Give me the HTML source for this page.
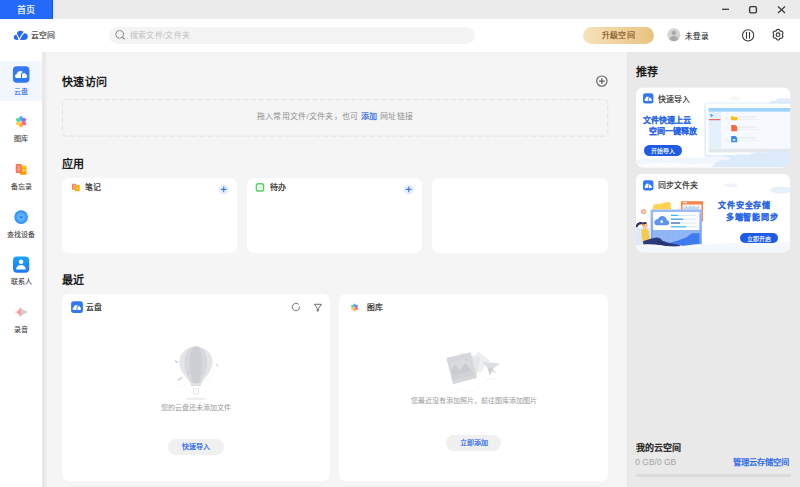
<!DOCTYPE html>
<html lang="zh-CN"><head><meta charset="utf-8">
<style>
*{box-sizing:border-box;margin:0;padding:0}
html,body{width:800px;height:487px;overflow:hidden;background:#f5f5f5;font-family:"Liberation Sans",sans-serif;color:#222}
.abs{position:absolute}
#titlebar{left:0;top:0;width:800px;height:19px;background:#ebebeb}
#tab{left:0;top:0;width:53px;height:19.5px;background:#2369fa;border-right:1px solid #0a55f5;border-bottom:1px solid #0a55f5;color:#fff;font-size:9px;-webkit-text-stroke:0.2px #fff;line-height:21px;text-align:center}
#header{left:0;top:19px;width:800px;height:33px;background:#fff}
#sidebar{left:0;top:52px;width:42px;height:435px;background:#fff}
#main{left:42px;top:52px;width:585px;height:435px;background:#f5f5f5;box-shadow:inset 0 1px 1px rgba(0,0,0,0.015)}
#right{left:627px;top:52px;width:173px;height:435px;background:#e9e9e9;box-shadow:inset 1px 1px 1.5px rgba(0,0,0,0.02)}
.sb-sel{left:0;top:61.3px;width:42px;height:39.4px;background:#f2f6fe}
.sb-icon{width:16.5px;height:16.5px;border-radius:4px}
.sb-txt{width:42px;text-align:center;font-size:7px;color:#444;line-height:8px;-webkit-text-stroke:0.1px #444}
.h2{font-size:11px;font-weight:bold;color:#191919;line-height:14px;letter-spacing:0.4px}
.card{background:#fff;border-radius:7px}
</style></head>
<body>
<div id="titlebar" class="abs"></div>
<div id="tab" class="abs">首页</div>
<!-- window controls -->
<svg class="abs" style="left:715px;top:0" width="85" height="19" viewBox="0 0 85 19">
 <line x1="7" y1="9.3" x2="14" y2="9.3" stroke="#333" stroke-width="1.25"/>
 <rect x="34.6" y="6.6" width="6.8" height="6.3" rx="1.3" fill="none" stroke="#333" stroke-width="1.35"/>
 <path d="M63 6.5 L70 13 M70 6.5 L63 13" stroke="#333" stroke-width="1.1"/>
</svg>
<div id="header" class="abs"></div>
<div id="sidebar" class="abs"></div>
<div id="main" class="abs"></div>
<div id="right" class="abs"></div>
<div class="abs" style="left:42px;top:52px;width:6px;height:435px;background:linear-gradient(90deg,#eeeeee 0,#e6e6e6 25%,#ebebeb 50%,#f1f1f1 75%,#f5f5f5 100%)"></div>
<div class="sb-sel abs"></div>


<!-- sidebar -->
<svg class="abs" style="left:0;top:52px" width="42" height="300" viewBox="0 52 42 300">
 <defs>
  <linearGradient id="gcont" x1="0" y1="0" x2="0" y2="1"><stop offset="0" stop-color="#19a3ff"/><stop offset="1" stop-color="#1f78fb"/></linearGradient>
  <radialGradient id="gfind" cx="0.5" cy="0.5" r="0.5"><stop offset="0" stop-color="#3b82f0"/><stop offset="0.18" stop-color="#3b86f2"/><stop offset="0.3" stop-color="#66bdfd"/><stop offset="0.6" stop-color="#4aa8fb"/><stop offset="1" stop-color="#2a8af5"/></radialGradient>
  <linearGradient id="gmemo2" x1="0" y1="0" x2="0" y2="1"><stop offset="0" stop-color="#ffc300"/><stop offset="1" stop-color="#ff9500"/></linearGradient>
  <filter id="tsh" x="-30%" y="-30%" width="160%" height="160%"><feDropShadow dx="0" dy="0" stdDeviation="0.6" flood-color="#000" flood-opacity="0.08"/></filter>
 </defs>
 <!-- cloud drive -->
 <rect x="12.9" y="66.2" width="16.5" height="16.5" rx="4" fill="#3177f6"/>
 <path d="M20.9 78 H16.8 C15.8 78 15 77.2 15 76.2 C15 75.2 15.7 74.4 16.6 74.3 C16.9 72.3 18.4 70.9 20.3 70.9 C21.3 70.9 22.2 71.3 22.9 71.9 C21.7 72.5 20.9 73.6 20.9 75 Z" fill="#fff"/>
 <path d="M22 78 V75.1 C22 73.9 22.9 72.9 24 72.9 C25 72.9 25.7 73.6 25.9 74.5 C26.6 74.7 27.1 75.4 27.1 76.2 C27.1 77.2 26.3 78 25.3 78 Z" fill="#fff"/>
 <!-- gallery -->
 <rect x="12.8" y="113.4" width="16.6" height="16.5" rx="4" fill="#fff" filter="url(#tsh)"/>
 <g transform="translate(21.07 121.7)"><path d="M0 -0.6 C1.4 -1.4 2.1 -2.4 2 -3.3 C1.9 -4.5 0.9 -5.8 0 -5.8 C-0.9 -5.8 -1.9 -4.5 -2 -3.3 C-2.1 -2.4 -1.4 -1.4 0 -0.6Z" fill="#34a3fa" opacity="0.88" transform="rotate(0)"/><path d="M0 -0.6 C1.4 -1.4 2.1 -2.4 2 -3.3 C1.9 -4.5 0.9 -5.8 0 -5.8 C-0.9 -5.8 -1.9 -4.5 -2 -3.3 C-2.1 -2.4 -1.4 -1.4 0 -0.6Z" fill="#8d5cf2" opacity="0.88" transform="rotate(60)"/><path d="M0 -0.6 C1.4 -1.4 2.1 -2.4 2 -3.3 C1.9 -4.5 0.9 -5.8 0 -5.8 C-0.9 -5.8 -1.9 -4.5 -2 -3.3 C-2.1 -2.4 -1.4 -1.4 0 -0.6Z" fill="#ff4f70" opacity="0.88" transform="rotate(120)"/><path d="M0 -0.6 C1.4 -1.4 2.1 -2.4 2 -3.3 C1.9 -4.5 0.9 -5.8 0 -5.8 C-0.9 -5.8 -1.9 -4.5 -2 -3.3 C-2.1 -2.4 -1.4 -1.4 0 -0.6Z" fill="#ff9c40" opacity="0.88" transform="rotate(180)"/><path d="M0 -0.6 C1.4 -1.4 2.1 -2.4 2 -3.3 C1.9 -4.5 0.9 -5.8 0 -5.8 C-0.9 -5.8 -1.9 -4.5 -2 -3.3 C-2.1 -2.4 -1.4 -1.4 0 -0.6Z" fill="#ffc73a" opacity="0.88" transform="rotate(240)"/><path d="M0 -0.6 C1.4 -1.4 2.1 -2.4 2 -3.3 C1.9 -4.5 0.9 -5.8 0 -5.8 C-0.9 -5.8 -1.9 -4.5 -2 -3.3 C-2.1 -2.4 -1.4 -1.4 0 -0.6Z" fill="#3fdb8c" opacity="0.88" transform="rotate(300)"/></g>
 <!-- memo -->
 <rect x="12.9" y="161" width="16.4" height="16.2" rx="4" fill="#fff" filter="url(#tsh)"/>
 <rect x="20" y="165.8" width="6.5" height="9" rx="0.8" fill="url(#gmemo2)"/>
 <rect x="15.7" y="164" width="6" height="9" rx="0.8" fill="#ff6d4a"/>
 <rect x="17" y="165.5" width="3.4" height="6" fill="#ffab95" opacity="0.7"/>
 <circle cx="23.6" cy="170.4" r="1.1" fill="#ffe38a"/>
 <!-- find device -->
 <rect x="12.9" y="209" width="16.4" height="16.2" rx="4" fill="#fff" filter="url(#tsh)"/>
 <circle cx="21.1" cy="217.1" r="6.8" fill="url(#gfind)"/>
 <!-- contacts -->
 <rect x="13" y="256.5" width="16.2" height="16.3" rx="4" fill="url(#gcont)"/>
 <circle cx="21.1" cy="261.7" r="2.3" fill="#fff"/>
 <path d="M16.1 269.4 C16.1 266.8 18.3 265.1 21 265.1 C23.7 265.1 25.8 266.8 25.8 269.4 Z" fill="#fff"/>
 <!-- record -->
 <rect x="12.9" y="304.2" width="16.4" height="16.3" rx="4" fill="#fff" filter="url(#tsh)"/>
 <path d="M21.1 308.8 L27.9 312.1 L21.1 315.4 Z" fill="#c9ced6"/>
 <path d="M13.9 312.1 L17.2 311.4 L21.1 307 V317.2 L17.2 312.8 Z" fill="#ff9da1"/>
</svg>
<div class="abs sb-txt" style="left:0;top:88.3px;color:#3070f3;-webkit-text-stroke:0.1px #3070f3">云盘</div>
<div class="abs sb-txt" style="left:0;top:134.5px">图库</div>
<div class="abs sb-txt" style="left:0;top:183px">备忘录</div>
<div class="abs sb-txt" style="left:0;top:231.2px">查找设备</div>
<div class="abs sb-txt" style="left:0;top:278px">联系人</div>
<div class="abs sb-txt" style="left:0;top:325.5px">录音</div>


<!-- main content -->
<div class="abs h2" style="left:62px;top:74.9px">快速访问</div>
<svg class="abs" style="left:595px;top:74px" width="14" height="14" viewBox="0 0 14 14">
 <circle cx="6.85" cy="7.1" r="5.15" fill="none" stroke="#606060" stroke-width="1.15"/>
 <path d="M6.85 4.2 V10 M3.95 7.1 H9.75" stroke="#606060" stroke-width="1.25"/>
</svg>
<svg class="abs" style="left:60px;top:97px" width="552" height="42"><rect x="2.4" y="2.5" width="545.4" height="36.6" rx="3.5" fill="none" stroke="#e3e3e3" stroke-width="1" stroke-dasharray="5.2 2.5"/></svg>
<div class="abs" style="left:62px;top:110.6px;width:546px;text-align:center;font-size:8px;letter-spacing:0.27px;line-height:12px;color:#8f8f8f">拖入常用文件/文件夹，也可 <span style="color:#2463eb;-webkit-text-stroke:0.2px #2463eb">添加</span> 网址链接</div>

<div class="abs h2" style="left:62px;top:157px">应用</div>
<div class="abs card" style="left:62px;top:177.5px;width:174.5px;height:75.5px"></div>
<div class="abs card" style="left:247.2px;top:177.5px;width:174.9px;height:75.5px"></div>
<div class="abs card" style="left:432.3px;top:177.5px;width:175.9px;height:75.5px"></div>
<svg class="abs" style="left:69px;top:180px" width="14" height="15" viewBox="0 0 14 15">
 <rect x="1" y="1.2" width="11.6" height="12.2" rx="3" fill="#fff" stroke="#f3f3f3" stroke-width="0.6"/>
 <rect x="3" y="3.75" width="4.2" height="6.1" rx="0.7" fill="#ff7a55"/>
 <rect x="4" y="4.7" width="2.2" height="4" fill="#ffb8a3" opacity="0.7"/>
 <rect x="6" y="5" width="4.75" height="6.25" rx="0.7" fill="#ffb100"/>
 <circle cx="8.4" cy="8.2" r="0.8" fill="#fff2c4"/>
</svg>
<div class="abs" style="left:84.5px;top:181.5px;font-size:7.9px;line-height:12px;color:#222;-webkit-text-stroke:0.2px #222">笔记</div>
<svg class="abs" style="left:217px;top:183px" width="13" height="13" viewBox="0 0 13 13">
 <circle cx="6.7" cy="6.4" r="5.2" fill="#e7eefd"/>
 <path d="M6.7 3.6 V9.2 M3.9 6.4 H9.5" stroke="#3a78f0" stroke-width="1.1"/>
</svg>
<svg class="abs" style="left:254px;top:181px" width="12" height="12" viewBox="0 0 12 12">
 <rect x="2.4" y="2.8" width="7.1" height="7.3" rx="1.8" fill="none" stroke="#55d364" stroke-width="1.5"/>
 <rect x="4.2" y="5.6" width="3.6" height="1.8" fill="#c9f0cd"/>
</svg>
<div class="abs" style="left:270px;top:181.5px;font-size:8.1px;line-height:12px;color:#222;-webkit-text-stroke:0.2px #222">待办</div>
<svg class="abs" style="left:402px;top:183px" width="13" height="13" viewBox="0 0 13 13">
 <circle cx="6.7" cy="6.4" r="5.2" fill="#e7eefd"/>
 <path d="M6.7 3.6 V9.2 M3.9 6.4 H9.5" stroke="#3a78f0" stroke-width="1.1"/>
</svg>

<div class="abs h2" style="left:62px;top:272.7px">最近</div>
<div class="abs card" style="left:62px;top:293.8px;width:267.9px;height:187.1px"></div>
<div class="abs card" style="left:339.3px;top:293.8px;width:268.9px;height:187.1px"></div>
<svg class="abs" style="left:70px;top:300px" width="14" height="14" viewBox="0 0 14 14">
 <rect x="1.1" y="1.2" width="11.8" height="11.7" rx="2.6" fill="#3177f6"/>
 <path d="M6.6 9.9 H3.8 C3.1 9.9 2.6 9.3 2.6 8.7 C2.6 8 3.1 7.5 3.7 7.4 C3.9 6 4.9 5 6.3 5 C7 5 7.6 5.3 8.1 5.7 C7.2 6.1 6.6 6.9 6.6 7.9 Z" fill="#fff"/>
 <path d="M7.4 9.9 V7.9 C7.4 7 8.1 6.3 8.9 6.3 C9.6 6.3 10.1 6.8 10.3 7.4 C10.8 7.6 11.1 8.1 11.1 8.7 C11.1 9.4 10.6 9.9 9.9 9.9 Z" fill="#fff"/>
</svg>
<div class="abs" style="left:86.2px;top:301.7px;font-size:7.9px;line-height:12px;color:#222;-webkit-text-stroke:0.2px #222">云盘</div>
<svg class="abs" style="left:290px;top:301px" width="12" height="12" viewBox="0 0 12 12">
 <path d="M9.6 6.8 A3.7 3.7 0 1 1 8.6 3.4" fill="none" stroke="#666" stroke-width="0.95"/>
 <path d="M9.9 5.3 L9.4 7.3 L8.3 6.1 Z" fill="#666"/>
</svg>
<svg class="abs" style="left:312px;top:302px" width="12" height="12" viewBox="0 0 12 12">
 <path d="M2.3 2.3 H9.5 L6.6 6.2 V8.5 L5.3 9.3 V6.2 Z" fill="none" stroke="#666" stroke-width="0.95" stroke-linejoin="round"/>
</svg>
<svg class="abs" style="left:348px;top:301px" width="13" height="13" viewBox="0 0 13 13">
 <g transform="translate(6.5 6.4) scale(0.68)"><path d="M0 -0.6 C1.4 -1.4 2.1 -2.4 2 -3.3 C1.9 -4.5 0.9 -5.8 0 -5.8 C-0.9 -5.8 -1.9 -4.5 -2 -3.3 C-2.1 -2.4 -1.4 -1.4 0 -0.6Z" fill="#34a3fa" opacity="0.88" transform="rotate(0)"/><path d="M0 -0.6 C1.4 -1.4 2.1 -2.4 2 -3.3 C1.9 -4.5 0.9 -5.8 0 -5.8 C-0.9 -5.8 -1.9 -4.5 -2 -3.3 C-2.1 -2.4 -1.4 -1.4 0 -0.6Z" fill="#8d5cf2" opacity="0.88" transform="rotate(60)"/><path d="M0 -0.6 C1.4 -1.4 2.1 -2.4 2 -3.3 C1.9 -4.5 0.9 -5.8 0 -5.8 C-0.9 -5.8 -1.9 -4.5 -2 -3.3 C-2.1 -2.4 -1.4 -1.4 0 -0.6Z" fill="#ff4f70" opacity="0.88" transform="rotate(120)"/><path d="M0 -0.6 C1.4 -1.4 2.1 -2.4 2 -3.3 C1.9 -4.5 0.9 -5.8 0 -5.8 C-0.9 -5.8 -1.9 -4.5 -2 -3.3 C-2.1 -2.4 -1.4 -1.4 0 -0.6Z" fill="#ff9c40" opacity="0.88" transform="rotate(180)"/><path d="M0 -0.6 C1.4 -1.4 2.1 -2.4 2 -3.3 C1.9 -4.5 0.9 -5.8 0 -5.8 C-0.9 -5.8 -1.9 -4.5 -2 -3.3 C-2.1 -2.4 -1.4 -1.4 0 -0.6Z" fill="#ffc73a" opacity="0.88" transform="rotate(240)"/><path d="M0 -0.6 C1.4 -1.4 2.1 -2.4 2 -3.3 C1.9 -4.5 0.9 -5.8 0 -5.8 C-0.9 -5.8 -1.9 -4.5 -2 -3.3 C-2.1 -2.4 -1.4 -1.4 0 -0.6Z" fill="#3fdb8c" opacity="0.88" transform="rotate(300)"/></g>
</svg>
<div class="abs" style="left:366.5px;top:302.2px;font-size:7.8px;line-height:12px;color:#222;-webkit-text-stroke:0.2px #222">图库</div>

<div class="abs" style="left:62px;top:402px;width:268px;text-align:center;font-size:7px;line-height:12px;color:#999">您的云盘还未添加文件</div>
<div class="abs" style="left:168px;top:438.5px;width:56px;height:16px;border-radius:8px;background:#f0f0f0;color:#2463eb;-webkit-text-stroke:0.2px #2463eb;font-size:7px;line-height:16px;text-align:center">快速导入</div>
<div class="abs" style="left:339px;top:395px;width:269px;text-align:center;font-size:7px;line-height:12px;color:#999">您最近没有添加照片，前往图库添加图片</div>
<div class="abs" style="left:445.7px;top:435px;width:55.7px;height:15.9px;border-radius:8px;background:#f0f0f0;color:#2463eb;-webkit-text-stroke:0.2px #2463eb;font-size:7px;line-height:16px;text-align:center">立即添加</div>


<!-- balloon illustration -->
<svg class="abs" style="left:165px;top:340px" width="60" height="65" viewBox="165 340 60 65">
 <ellipse cx="195.7" cy="398.8" rx="11.5" ry="1.3" fill="#ededee"/>
 <path d="M195.8 346.4 C205.5 346.4 212.6 353.5 212.6 362.5 C212.6 371 204.5 377.5 201.4 383.4 H190.6 C187.3 377.5 179.1 371 179.1 362.5 C179.1 353.5 186.2 346.4 195.8 346.4 Z" fill="#e4e5e8"/>
 <path d="M195.8 346.4 C202.8 346.4 207.4 353.5 207.4 362.5 C207.4 371 202.8 377.5 200.6 383.4 H191.2 C189 377.5 184.4 371 184.4 362.5 C184.4 353.5 189 346.4 195.8 346.4 Z" fill="#d6d8dc"/>
 <path d="M195.8 346.4 C200 346.4 202.2 353.5 202.2 362.5 C202.2 371 199.8 377.5 198.8 383.4 H193 C192 377.5 189.6 371 189.6 362.5 C189.6 353.5 191.8 346.4 195.8 346.4 Z" fill="#cdcfd4"/>
 <rect x="191" y="383.2" width="10" height="2.8" rx="0.6" fill="#e0e1e4"/>
 <path d="M192.6 386 L193.8 389 M199.4 386 L198.2 389" stroke="#dcdde0" stroke-width="0.6"/>
 <rect x="193.6" y="388.8" width="4.8" height="5.4" rx="0.8" fill="none" stroke="#e0e1e4" stroke-width="0.9"/>
 <path d="M174.6 360.4 Q177 360 178.2 362.9 Q175.6 363.4 174.6 360.4Z" fill="#c6c8cd"/>
 <path d="M215.5 364 Q217.6 363 218.6 366.4 Q216.2 366.6 215.5 364Z" fill="#d8d9dc"/>
 <path d="M177 381 Q178.5 377 183 376.5 Q182 380.5 177 381Z" fill="#d9dadd"/>
 <path d="M187 371.6 Q188.8 372.2 189 375 Q187.2 374.4 187 371.6Z" fill="#c4c6cb"/>
 <path d="M177.5 387 Q185 385.5 189 382.5" stroke="#e0e1e4" stroke-width="0.7" stroke-dasharray="1.1 1.3" fill="none"/>
 <path d="M204 380 Q210 380 212 376.5 Q214 372 213.5 368" stroke="#e0e1e4" stroke-width="0.7" stroke-dasharray="1.1 1.3" fill="none"/>
</svg>
<!-- photo illustration -->
<svg class="abs" style="left:430px;top:345px" width="80" height="52" viewBox="430 345 80 52">
 <path d="M478.5 351.3 L490 360.6 L480 373 L468.5 363.7Z" fill="#eeeff0"/>
 <path d="M461 353 L480.7 357.5 L476 378.5 L456.3 374Z" fill="#e5e6e9"/>
 <path d="M446.3 358.1 L470.6 352.2 L476.8 377.8 L453.1 384.3Z" fill="#d5d7db"/>
 <path d="M449.4 362.6 L468.8 357.8 L472.4 372.8 L453 377.6Z" fill="#d9dbde"/>
 <path d="M451.2 369.5 L455 364.5 L460 370.5 L465.2 363 L471.5 369.8 L473 374.6 L453 379.5Z" fill="#c8cbd0"/>
 <path d="M452.8 375.6 L472.4 370.8 L473 374.6 L453.4 379.4Z" fill="#cfd2d6"/>
 <circle cx="466.3" cy="359.8" r="1.1" fill="#c4c7cc"/>
 <path d="M482 361.8 L500 363.5 L493 368.5 L496.5 373.6 L491.5 371 L490 375.6 L487.3 367.5Z" fill="#dcdde0"/>
 <path d="M487.3 367.5 L493 368.5 L490 375.6Z" fill="#cfd1d5"/>
 <path d="M486.5 379 H495" stroke="#ececee" stroke-width="0.9"/>
 <path d="M445 392 Q452 394 457 391 Q461 387 464 390 Q468 394 478 388 Q486 383 487 379" stroke="#e3e4e6" stroke-width="0.6" stroke-dasharray="1 1.1" fill="none"/>
</svg>

<!-- right panel -->
<div class="abs h2" style="left:636px;top:65.3px">推荐</div>
<svg class="abs" style="left:636px;top:87px" width="155" height="167" viewBox="636 87 155 167">
 <defs>
  <clipPath id="c1"><rect x="636" y="87.4" width="154.2" height="80" rx="7"/></clipPath>
  <clipPath id="c2"><rect x="636" y="173.8" width="154.2" height="78.8" rx="7"/></clipPath>
  <linearGradient id="gmon" x1="0" y1="0" x2="0" y2="1"><stop offset="0" stop-color="#9dbcf7"/><stop offset="1" stop-color="#6f9cf2"/></linearGradient>
  <linearGradient id="gchart" x1="0" y1="0" x2="0" y2="1"><stop offset="0" stop-color="#4f8af3"/><stop offset="1" stop-color="#2f6de6"/></linearGradient>
  <filter id="wglow" x="-20%" y="-30%" width="140%" height="160%"><feDropShadow dx="0" dy="0.6" stdDeviation="1.3" flood-color="#4a9cf5" flood-opacity="0.8"/></filter>
 </defs>
 <g clip-path="url(#c1)">
  <rect x="636" y="87.4" width="154" height="79.6" fill="#fff"/>
  <!-- clouds -->
  <ellipse cx="735" cy="98.5" rx="6" ry="2.2" fill="#f4f7fb"/>
  <path d="M768 104.5 Q770 100.5 775 100.8 Q778 97.5 783 98.6 Q788 97 792 100 V104.5Z" fill="#e3eefa"/>
  <!-- window -->
  <rect x="705.8" y="103.6" width="90" height="51.8" rx="1.5" fill="#fff" filter="url(#wglow)"/>
  <rect x="708.5" y="108" width="82" height="3.8" fill="#9ed2fa"/>
  <rect x="708.5" y="111.8" width="12.9" height="37" fill="#e3f1fd"/>
  <rect x="721.4" y="111.8" width="69" height="37" fill="#f6faff"/>
  <rect x="708.5" y="148.8" width="82" height="3.6" fill="#e3e6ea"/>
  <path d="M710.2 113.8 L713.3 115.2 L711 117 Z" fill="#2f86f0"/>
  <rect x="709" y="119.2" width="11.5" height="1" fill="#e64a4a"/>
  <circle cx="726.8" cy="118" r="1.1" fill="none" stroke="#e2e6ea" stroke-width="0.4"/>
  <circle cx="726.8" cy="128" r="1.1" fill="none" stroke="#e2e6ea" stroke-width="0.4"/>
  <circle cx="726.8" cy="139.4" r="1.1" fill="none" stroke="#e2e6ea" stroke-width="0.4"/>
  <path d="M730.9 116.2 H733.8 L734.6 117 H737.5 V120.2 H730.9Z" fill="#ffbd12"/>
  <path d="M731.2 125 H735.4 L737.2 126.8 V131.2 H731.2Z" fill="#fa6a3c"/>
  <path d="M731.2 136 H735.4 L737.2 137.8 V142.3 H731.2Z" fill="#3b86f6"/>
  <rect x="732.8" y="139" width="2.6" height="1.8" fill="#d9e8ff"/>
  <rect x="739" y="116.6" width="17" height="0.9" fill="#e1e3e6"/>
  <rect x="739" y="119" width="20" height="0.8" fill="#eceef0"/>
  <rect x="739" y="126.6" width="17" height="0.9" fill="#e1e3e6"/>
  <rect x="739" y="129" width="20" height="0.8" fill="#eceef0"/>
  <rect x="739" y="137.6" width="17" height="0.9" fill="#e1e3e6"/>
  <rect x="739" y="140" width="20" height="0.8" fill="#eceef0"/>
  <!-- bottom clouds -->
  <path d="M636 160 Q650 157 664 159 Q680 156 700 158.5 Q712 154 730 157 Q748 151 765 155 Q778 151 790 154 V168 H636Z" fill="#f1f6fc"/>
  <path d="M636 165 Q660 161 690 164 Q720 162 750 165 L790 168 H636Z" fill="#fafcfe"/>
  <path d="M712 167 Q716 159 728 160 Q734 152 748 155 Q756 150 766 153 Q774 148 784 151 Q790 150 792 152 V167Z" fill="#dceafa"/>
 </g>
 <g clip-path="url(#c2)">
  <rect x="636" y="173.7" width="154" height="78.7" fill="#fff"/>
  <ellipse cx="731" cy="185.5" rx="7" ry="2.2" fill="#f0f4fa"/>
  <ellipse cx="781" cy="190" rx="11" ry="3.5" fill="#e6effa"/>
  <!-- orange board -->
  <rect x="680.9" y="201.2" width="22.1" height="20.3" fill="#f5874b"/>
  <rect x="682.5" y="204.5" width="19" height="15" fill="#fff3ea"/>
  <rect x="683" y="202.3" width="4" height="0.9" fill="#fff"/>
  <path d="M684 207.5 V209.5 M686 206 V209.5 M688 207 V209.5 M690 205.5 V209.5 M692 206.5 V209.5 M694 205.8 V209.5 M696 207 V209.5 M698 206.2 V209.5" stroke="#5eb3f5" stroke-width="0.8"/>
  <!-- folder -->
  <path d="M652.5 209.5 L653.5 204.5 L662 203.5 L664 202.4 L670 202 L671.6 209.5Z" fill="#ffd24f"/>
  <!-- flower -->
  <circle cx="643.6" cy="211.5" r="2.6" fill="#f9a68e"/>
  <circle cx="643.6" cy="211.5" r="1" fill="#fff1ea"/>
  <!-- monitor -->
  <rect x="650.6" y="209.5" width="51.2" height="35.5" rx="0.8" fill="url(#gmon)"/>
  <rect x="653.1" y="212" width="46.3" height="18.1" fill="#fff"/>
  <rect x="653.1" y="230.1" width="46.3" height="16" fill="#8fb5f6"/>
  <path d="M656 230.1 V246 M661 230.1 V246 M666 230.1 V246 M671 230.1 V246 M676 230.1 V246 M681 230.1 V246 M686 230.1 V246 M691 230.1 V246 M696 230.1 V246" stroke="#9dbff7" stroke-width="0.5"/>
  <path d="M664 246 L670 243 L678 240.5 L686 237.6 L692 233.2 L699.4 233.2 V246Z" fill="#3d7bee"/>
  <path d="M656.8 225.2 H666.6 C668.1 225.2 669.2 224.1 669.2 222.7 C669.2 221.3 668.2 220.3 666.9 220.2 C666.6 217.8 664.7 216 662.3 216 C660.3 216 658.7 217.3 658.1 219.1 C656.2 219.2 654.3 220.6 654.3 222.5 C654.3 224 655.4 225.2 656.8 225.2Z" fill="#5c95ee"/>
  <circle cx="661.7" cy="221.7" r="1.4" fill="#fff"/>
  <rect x="671" y="214.8" width="25.3" height="1.2" fill="#d9e8fb"/>
  <rect x="671" y="214.8" width="7" height="1.2" fill="#34baf6"/>
  <rect x="671" y="218.6" width="25.3" height="1.2" fill="#d9e8fb"/>
  <rect x="671" y="218.6" width="12" height="1.2" fill="#2f9cf2"/>
  <rect x="671" y="222.4" width="25.3" height="1.2" fill="#d9e8fb"/>
  <rect x="671" y="222.4" width="9" height="1.2" fill="#3d62b5"/>
  <rect x="671" y="226.2" width="25.3" height="1.2" fill="#d9e8fb"/>
  <rect x="671" y="226.2" width="15" height="1.2" fill="#36bdf7"/>
  <!-- woman -->
  <rect x="636" y="228" width="14.6" height="17" fill="#dce9fb"/>
  <path d="M635.8 226.8 Q636.3 222.6 640 222 Q642.5 221.8 643.2 223.2 L641.5 224.2 Q638.5 224 637.2 227.6 Z" fill="#2c2a60"/>
  <path d="M642 224 Q642.8 221.8 645.2 222 Q647.6 222.4 647.8 225.6 Q647.9 228.2 645.6 228.8 Q642.8 229 642.3 226.6Z" fill="#f4c2a6"/>
  <path d="M641.8 224.6 Q642.2 221.8 645 221.9 Q646.6 222 647 223.4 Q644.4 223.4 643.6 225.2Z" fill="#2c2a60"/>
  <circle cx="643.6" cy="224.9" r="1.2" fill="#f2a425"/>
  <path d="M641.6 229.4 Q645.6 228 648.2 229.6 Q649.8 234 650 241.2 L642.2 241.6 Q641.2 235 641.6 229.4Z" fill="#f5cd45"/>
  <path d="M645.6 232.5 Q646.6 237.5 646.3 243.2" stroke="#f1b89e" stroke-width="1.1" fill="none"/>
  <path d="M643 241.2 Q650 238.6 656.2 237.6 Q660 237.4 663 241 Q670 243.6 680 245.2 L680.6 247 Q670 247.6 661 245 Q652 245 643.4 244.8Z" fill="#2c3a7c"/>
  <path d="M657 241 Q662 242.6 667 247.8 L670 248.4" stroke="#233066" stroke-width="1.6" fill="none"/>
  <ellipse cx="668.4" cy="248.2" rx="1.5" ry="0.9" fill="#f1b89e"/>
  <ellipse cx="680.8" cy="246" rx="1.3" ry="0.9" fill="#f1b89e"/>
  <!-- bottom clouds -->
  <path d="M636 245 Q650 243.5 662 245.5 Q674 247.5 690 245 Q700 243.2 712 244.5 Q735 241.5 758 243 Q775 240.5 790 242 V252.6 H636Z" fill="#f4f7fb"/>
 </g>
</svg>
<div class="abs" style="left:657.5px;top:93.8px;font-size:8px;letter-spacing:0.1px;line-height:12px;color:#222;-webkit-text-stroke:0.15px #222">快速导入</div>
<div class="abs" style="left:657.5px;top:180px;font-size:8px;letter-spacing:0.1px;line-height:12px;color:#222;-webkit-text-stroke:0.15px #222">同步文件夹</div>
<svg class="abs" style="left:642px;top:92px" width="13" height="13" viewBox="0 0 13 13">
 <rect x="1" y="1.2" width="10.4" height="10.4" rx="2.4" fill="#3177f6"/>
 <path d="M5.9 8.9 H3.5 C2.9 8.9 2.5 8.4 2.5 7.8 C2.5 7.2 2.9 6.8 3.4 6.7 C3.6 5.5 4.4 4.6 5.6 4.6 C6.2 4.6 6.8 4.9 7.2 5.2 C6.4 5.6 5.9 6.3 5.9 7.2 Z" fill="#fff"/>
 <path d="M6.6 8.9 V7.2 C6.6 6.4 7.2 5.8 7.9 5.8 C8.5 5.8 9 6.2 9.1 6.8 C9.6 7 9.9 7.4 9.9 7.9 C9.9 8.5 9.5 8.9 8.9 8.9 Z" fill="#fff"/>
</svg>
<svg class="abs" style="left:642px;top:179px" width="13" height="13" viewBox="0 0 13 13">
 <rect x="1" y="1.2" width="10.4" height="10.4" rx="2.4" fill="#3177f6"/>
 <path d="M5.9 8.9 H3.5 C2.9 8.9 2.5 8.4 2.5 7.8 C2.5 7.2 2.9 6.8 3.4 6.7 C3.6 5.5 4.4 4.6 5.6 4.6 C6.2 4.6 6.8 4.9 7.2 5.2 C6.4 5.6 5.9 6.3 5.9 7.2 Z" fill="#fff"/>
 <path d="M6.6 8.9 V7.2 C6.6 6.4 7.2 5.8 7.9 5.8 C8.5 5.8 9 6.2 9.1 6.8 C9.6 7 9.9 7.4 9.9 7.9 C9.9 8.5 9.5 8.9 8.9 8.9 Z" fill="#fff"/>
</svg>
<div class="abs" style="left:642.5px;top:114.7px;font-size:8px;letter-spacing:0.1px;line-height:12px;color:#2765e8;font-weight:bold;-webkit-text-stroke:0.05px #2765e8">文件快速上云</div>
<div class="abs" style="left:649px;top:125.5px;font-size:8px;letter-spacing:0.1px;line-height:12px;color:#2765e8;font-weight:bold;-webkit-text-stroke:0.05px #2765e8">空间一键释放</div>
<div class="abs" style="left:643.5px;top:145.1px;width:38.3px;height:11.2px;border-radius:5.6px;background:#1e5be6;color:#fff;font-size:6px;line-height:13.2px;text-align:center;-webkit-text-stroke:0.1px #fff">开始导入</div>
<div class="abs" style="left:718px;top:199.5px;font-size:8px;letter-spacing:0.85px;line-height:12px;color:#2765e8;font-weight:bold;-webkit-text-stroke:0.05px #2765e8">文件安全存储</div>
<div class="abs" style="left:725.7px;top:212.1px;font-size:8px;letter-spacing:0.85px;line-height:12px;color:#2765e8;font-weight:bold;-webkit-text-stroke:0.05px #2765e8">多端智能同步</div>
<div class="abs" style="left:740.3px;top:232.5px;width:37.9px;height:10.8px;border-radius:5.4px;background:#1e5be6;color:#fff;font-size:6px;line-height:13px;text-align:center;-webkit-text-stroke:0.1px #fff">立即开启</div>
<div class="abs" style="left:636px;top:442px;font-size:9px;line-height:12px;color:#191919;-webkit-text-stroke:0.35px #191919">我的云空间</div>
<div class="abs" style="left:635.2px;top:456px;font-size:8.5px;line-height:12px;color:#a5a5a5">0 GB/0 GB</div>
<div class="abs" style="left:732.5px;top:456px;font-size:8.3px;line-height:12px;color:#2463eb;-webkit-text-stroke:0.25px #2463eb">管理云存储空间</div>
<div class="abs" style="left:636px;top:473.9px;width:154.5px;height:3.6px;border-radius:1.8px;background:#dbdbdb"></div>

<!-- header contents -->
<svg class="abs" style="left:12px;top:28px" width="18" height="14" viewBox="12 28 18 14">
 <g fill="#2468f6">
  <circle cx="16.3" cy="37.3" r="2.5"/>
  <circle cx="20.6" cy="34.4" r="3.7"/>
  <circle cx="24.4" cy="36.6" r="3.3"/>
  <rect x="16.3" y="36.5" width="8.1" height="3.4"/>
 </g>
 <path d="M16.9 34.6 Q18.2 36.6 19.1 40.3 Q20.9 35.4 24.4 32" stroke="#fff" stroke-width="1.05" fill="none"/>
</svg>
<div class="abs" style="left:31.3px;top:29.5px;font-size:7.9px;line-height:12px;color:#333;-webkit-text-stroke:0.15px #333">云空间</div>
<div class="abs" style="left:108.5px;top:27px;width:366.5px;height:17px;border-radius:8.5px;background:#f4f4f4"></div>
<svg class="abs" style="left:114px;top:29px" width="12" height="12" viewBox="0 0 12 12">
 <circle cx="5.7" cy="5.3" r="3.9" fill="none" stroke="#8a8a8a" stroke-width="1"/>
 <path d="M8.6 8.3 L10.3 10" stroke="#8a8a8a" stroke-width="1.1" stroke-linecap="round"/>
</svg>
<div class="abs" style="left:129.5px;top:29.6px;font-size:8px;letter-spacing:0.35px;line-height:12px;color:#bdbdbd">搜索文件/文件夹</div>
<div class="abs" style="left:583px;top:27px;width:71px;height:17px;border-radius:8.5px;background:linear-gradient(90deg,#f6e2bd,#e9c27f);color:#7d4d22;font-size:8px;letter-spacing:0.1px;-webkit-text-stroke:0.15px #7d4d22;line-height:17px;text-align:center">升级空间</div>
<svg class="abs" style="left:667px;top:27.5px" width="14" height="14" viewBox="0 0 14 14">
 <circle cx="6.8" cy="6.8" r="6.6" fill="#d4d4d4"/>
 <circle cx="6.8" cy="4.9" r="2.2" fill="#a9a9a9"/>
 <path d="M2.6 11.2 C3 8.9 4.6 8 6.8 8 C9 8 10.6 8.9 11 11.2 C10 12.3 8.5 13 6.8 13 C5.1 13 3.6 12.3 2.6 11.2Z" fill="#a9a9a9"/>
</svg>
<div class="abs" style="left:684.8px;top:30.5px;font-size:7.6px;line-height:12px;color:#222;-webkit-text-stroke:0.1px #222">未登录</div>
<svg class="abs" style="left:741px;top:28px" width="14" height="14" viewBox="0 0 14 14">
 <circle cx="7.1" cy="7.3" r="5.6" fill="none" stroke="#333" stroke-width="1.05"/>
 <path d="M5.5 4.3 V10.2" stroke="#333" stroke-width="1.05" fill="none" stroke-linecap="round"/>
 <path d="M5.9 10.5 L4.6 9.1 L5.9 8.6 Z" fill="#333"/>
 <path d="M8.5 10.2 V4.4" stroke="#333" stroke-width="1.05" fill="none" stroke-linecap="round"/>
 <path d="M8.1 4.1 L9.6 5.4 L8.1 6 Z" fill="#333"/>
</svg>
<svg class="abs" style="left:771px;top:28px" width="14" height="14" viewBox="0 0 14 14">
 <path d="M7.05 1.30 L7.33 1.31 L7.61 1.36 L7.87 1.47 L8.12 1.64 L8.33 1.86 L8.52 2.12 L8.69 2.38 L8.84 2.63 L9.00 2.83 L9.17 2.97 L9.39 3.05 L9.64 3.09 L9.93 3.10 L10.24 3.11 L10.56 3.14 L10.86 3.22 L11.13 3.35 L11.35 3.52 L11.53 3.74 L11.68 3.98 L11.81 4.22 L11.91 4.49 L11.95 4.77 L11.93 5.07 L11.84 5.37 L11.71 5.66 L11.57 5.93 L11.43 6.19 L11.33 6.43 L11.30 6.65 L11.33 6.87 L11.43 7.11 L11.57 7.37 L11.71 7.64 L11.84 7.93 L11.93 8.23 L11.95 8.53 L11.91 8.81 L11.81 9.08 L11.68 9.32 L11.53 9.56 L11.35 9.78 L11.13 9.95 L10.86 10.08 L10.56 10.16 L10.24 10.19 L9.93 10.20 L9.64 10.21 L9.39 10.25 L9.17 10.33 L9.00 10.47 L8.84 10.67 L8.69 10.92 L8.52 11.18 L8.33 11.44 L8.12 11.66 L7.87 11.83 L7.61 11.94 L7.33 11.99 L7.05 12.00 L6.77 11.99 L6.49 11.94 L6.23 11.83 L5.98 11.66 L5.77 11.44 L5.58 11.18 L5.41 10.92 L5.26 10.67 L5.10 10.47 L4.93 10.33 L4.71 10.25 L4.46 10.21 L4.17 10.20 L3.86 10.19 L3.54 10.16 L3.24 10.08 L2.97 9.95 L2.75 9.78 L2.57 9.56 L2.42 9.33 L2.29 9.08 L2.19 8.81 L2.15 8.53 L2.17 8.23 L2.26 7.93 L2.39 7.64 L2.53 7.37 L2.67 7.11 L2.77 6.87 L2.80 6.65 L2.77 6.43 L2.67 6.19 L2.53 5.93 L2.39 5.66 L2.26 5.37 L2.17 5.07 L2.15 4.77 L2.19 4.49 L2.29 4.22 L2.42 3.98 L2.57 3.74 L2.75 3.52 L2.97 3.35 L3.24 3.22 L3.54 3.14 L3.86 3.11 L4.17 3.10 L4.46 3.09 L4.71 3.05 L4.93 2.97 L5.10 2.83 L5.26 2.63 L5.41 2.38 L5.58 2.12 L5.77 1.86 L5.98 1.64 L6.23 1.47 L6.49 1.36 L6.77 1.31Z" fill="none" stroke="#333" stroke-width="1.1" stroke-linejoin="round"/>
 <circle cx="7.05" cy="6.65" r="1.8" fill="none" stroke="#333" stroke-width="1.1"/>
</svg>

</body></html>
